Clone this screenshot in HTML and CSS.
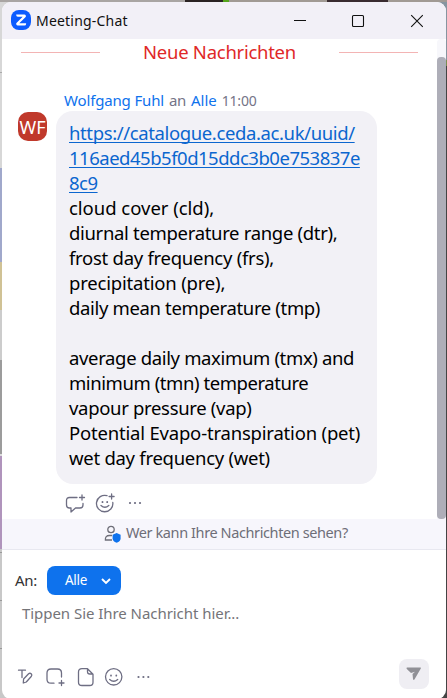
FILE: index.html
```html
<!DOCTYPE html>
<html lang="de">
<head>
<meta charset="utf-8">
<title>Meeting-Chat</title>
<link rel="stylesheet" href="styles.css">
</head>
<body>
<div class="desktop">
<div class="window">
  <header class="titlebar">
    <svg class="logo" width="20" height="20" viewBox="0 0 20 20"><rect width="20" height="20" rx="8" fill="#0b5cff"/><path d="M5.200 4.500h8.300q1.600 0 1.400 2.200l-6.600 6.600h6.800v.6q0 1.600-1.600 1.600H6.600q-1.600 0-1.400-2.200l6.500-6.600H6.800q-1.600 0-1.600-1.600z" fill="#fff"/></svg>
    <h1 class="title">Meeting-Chat</h1>
    <svg class="controls" width="132" height="14" viewBox="0 0 132 14" fill="none" stroke="#111" stroke-width="1.100"><path d="M1 6.500h12"/><rect x="59.500" y="1.500" width="11" height="11" rx="1"/><path d="M118.200 1.200l11.600 11.600M129.800 1.200l-11.600 11.600"/></svg>
  </header>
  <main class="chat">
    <div class="messages">
      <div class="divider"><i></i><span>Neue Nachrichten</span><i></i></div>
      <div class="meta"><b class="who">Wolfgang Fuhl</b><span class="an">an</span><b>Alle</b><time>11:00</time></div>
      <div class="message">
        <div class="avatar">WF</div>
        <div class="bubble">
          <a class="l1">https://catalogue.ceda.ac.uk/uuid/</a>
          <a class="l2">116aed45b5f0d15ddc3b0e753837e</a>
          <a class="l2">8c9</a>
          <span class="l4">cloud cover (cld),</span>
          <span class="l5">diurnal temperature range (dtr),</span>
          <span class="l6">frost day frequency (frs),</span>
          <span class="l7">precipitation (pre),</span>
          <span class="l8">daily mean temperature (tmp)</span>
          <span>&nbsp;</span>
          <span class="l8">average daily maximum (tmx) and</span>
          <span class="l11">minimum (tmn) temperature</span>
          <span class="l5">vapour pressure (vap)</span>
          <span class="l7">Potential Evapo-transpiration (pet)</span>
          <span class="l6">wet day frequency (wet)</span>
        </div>
      </div>
      <svg class="actions" width="80" height="22" viewBox="0 0 80 22" fill="none" stroke="#6e6e83" stroke-width="1.300" stroke-linecap="round" stroke-linejoin="round"><path d="M13 4.500H5.500q-3 0-3 3v4.500q0 3 3 3H7v4l4.500-4H16q3 0 3-3v-1.500M18 2v5M15.500 4.500h5"/><path d="M43 2.700A8.200 8.200 0 1 0 48.800 9.500M47.600 1v5M45.100 3.500h5M37 12.500q3.900 3.600 7.800 0"/><path d="M38.500 8.800v.4M43.200 8.800v.4" stroke-width="1.800"/><path d="M66 10h.01M71 10h.01M76 10h.01" stroke-width="2.200"/></svg>
    </div>
    <div class="scrollbar"><i></i></div>
  </main>
  <div class="notice">
    <svg width="18" height="19" viewBox="0 0 18 19"><g fill="none" stroke="#6e6e78" stroke-width="1.300"><circle cx="7" cy="4.500" r="3.200"/><path d="M8 15H1.400Q1 10.500 5.500 10.500H8"/></g><path d="M12.600 8l4 1.800v3.400q0 3-4 4.600-4-1.600-4-4.600V9.800z" fill="#0e72ed"/></svg>
    <span>Wer kann Ihre Nachrichten sehen?</span>
  </div>
  <section class="composer">
    <div class="to"><label>An:</label><button>Alle<svg width="10" height="7" viewBox="0 0 10 7"><path d="M1 1l4 4 4-4" fill="none" stroke="#fff" stroke-width="1.900"/></svg></button></div>
    <div class="placeholder">Tippen Sie Ihre Nachricht hier...</div>
    <div class="tools">
      <svg width="136" height="22" viewBox="0 0 136 22" fill="none" stroke="#6e6e83" stroke-width="1.300" stroke-linecap="round" stroke-linejoin="round"><path d="M2.500 4.200h7M6 4.200v7.300M7.300 17l.3-4 5-5.200q1.300-1.200 2.600 0 1.300 1.300 0 2.700L10.300 16z"/><path d="M38 17.200h-3q-4 0-4-4V7q0-4 4-4h6.500q4 0 4 4v4M45.500 14.500v5M43 17h5"/><path d="M66 2.700h5.500l5.500 5.500v8q0 3.300-3.300 3.300H66q-3.500 0-3.500-3.300V6q0-3.300 3.500-3.300zM71.500 3v2.700q0 2.300 2.300 2.300h3"/><circle cx="97.700" cy="10.800" r="8.200"/><path d="M93.700 13.500q4 3.600 8 0"/><path d="M95 9.300v.4M100.300 9.300v.4" stroke-width="1.700"/><path d="M122.500 11h.01M127.400 11h.01M132.300 11h.01" stroke-width="2.200"/></svg>
      <div class="send"><svg width="16" height="14" viewBox="0 0 16 14"><path d="M1 .5h13.300q1 0 .5 1L8.600 12.300q-1 1.500-1.600-.2L6.500 7 9 4.800 5 5.900.800 2Q0 .8 1 .5z" fill="#909096"/></svg></div>
    </div>
  </section>
</div>
</div>
</body>
</html>
```
FILE: styles.css
```css
*{box-sizing:border-box}
body{margin:0;font-family:"Noto Sans","Open Sans",sans-serif;background:#444}
.desktop{height:698px;padding:2px 1px 0 2px;overflow:hidden;background:
  linear-gradient(90deg,#a9a5a3 185px,#2a2323 185px 223px,#55a51c 223px 229px,#a19a94 229px 327px,#392b30 327px 388px,#a19a94 388px) 0 0/100% 2px no-repeat,
  linear-gradient(#8795a0 60px,#7c8d51 60px 66px,#444 66px) 100% 0/12px 100% no-repeat,
  linear-gradient(#d7d7d7 72px,#aaa 72px 73px,#d7d7d7 73px 168px,#a0a8cb 168px 262px,#d0c295 262px 310px,#ccc 310px 360px,#9c9c9c 360px 454px,#ddd 454px 456px,#b094bc 456px 549px,#c8c8c8 549px 552px,#999 552px 553px,#c8c8c8 553px 600px,#999 600px 601px,#c8c8c8 601px 648px,#999 648px 649px,#c8c8c8 649px) 0 0/20px 100% no-repeat}
.window{height:697px;border-radius:9px;background:#fff;overflow:hidden}
.titlebar{height:37px;background:#f2f0f7;display:flex;align-items:center;padding:0 21px 0 9px}
.logo{margin-bottom:1px}
.title{font-size:14px;line-height:20px;font-weight:400;margin:0 0 0 5px;flex:1;letter-spacing:.2px;color:#111}
.chat{height:480px;display:flex}
.messages{flex:1}
.divider{display:flex;height:27px;line-height:25px;align-items:center;color:#e02828;font-size:18.500px;letter-spacing:-.27px;padding:0 19px;justify-content:space-between}
.divider span{padding-bottom:2px}
.divider i{width:79px;height:1px;background:#f3b4b4}
.meta{display:flex;align-items:baseline;gap:5px;height:22px;line-height:22px;font-size:15px;margin:23px 0 0 62px;color:#747487}
.meta b{font-weight:400;color:#0e72ed}
.meta .who{letter-spacing:-.15px}
.meta .an{letter-spacing:-.4px}
.meta time{font-size:14px;letter-spacing:-.2px}
.message{display:flex;padding-left:16px;gap:9px}
.avatar{width:29px;height:29px;margin-top:1px;border-radius:10px;background:#c0392b;color:#fff;font-size:18px;line-height:31px;text-align:center}
.bubble{display:flex;flex-direction:column;align-items:flex-start;width:321px;height:373px;padding:9px 0 0 13px;border-radius:17px;background:#f2f1f6;color:#000;font-size:18.500px;line-height:25px}
.bubble a{color:#0b66cf;height:25px;text-decoration:underline;text-decoration-thickness:1px;text-underline-offset:2px;text-decoration-skip-ink:none}
.l1{letter-spacing:-.38px}
.l2{letter-spacing:-.49px}
.l4{letter-spacing:-.02px}
.l5{letter-spacing:-.32px}
.l6{letter-spacing:-.27px}
.l7{letter-spacing:-.19px}
.l8{letter-spacing:-.35px}
.l11{letter-spacing:-.43px}
.actions{display:block;margin:9px 0 0 62px}
.scrollbar{width:9px;padding-top:18px;background:#f7f7fb;border-radius:4px 4px 0 0}
.scrollbar i{display:block;height:462px;border-radius:4px;background:#aeaeb8}
.notice{height:31px;display:flex;align-items:center;padding:0 0 2px 102px;gap:4px;background:#f7f6fc;border-bottom:1px solid #e8e8f0;font-size:14.500px;letter-spacing:-.4px;color:#6e6e78}
.notice svg{margin-top:2px}
.notice span{padding-bottom:2px}
.composer{height:148px;padding:16px 17px 0 13px}
.to{display:flex;align-items:center;gap:11px;height:29px;font-size:15px;letter-spacing:-.3px;color:#333}
.to label{width:21px;line-height:28px;padding-bottom:2px}
.to button{display:flex;align-items:center;justify-content:space-between;width:74px;height:29px;padding:0 10px 1px 18px;border:0;border-radius:8px;background:#0e72ed;color:#fff;font:13.500px "Noto Sans",sans-serif;letter-spacing:-.3px}
.to svg{margin-top:3px}
.placeholder{height:64px;padding:6px 0 0 7px;line-height:24px;font-size:15px;letter-spacing:-.05px;color:#747478}
.tools{display:flex;justify-content:space-between;align-items:flex-start}
.tools>svg{margin:7px 0 0 1px}
.send{display:flex;align-items:center;justify-content:center;width:30px;height:30px;border-radius:8px;background:#efeef3}
```
